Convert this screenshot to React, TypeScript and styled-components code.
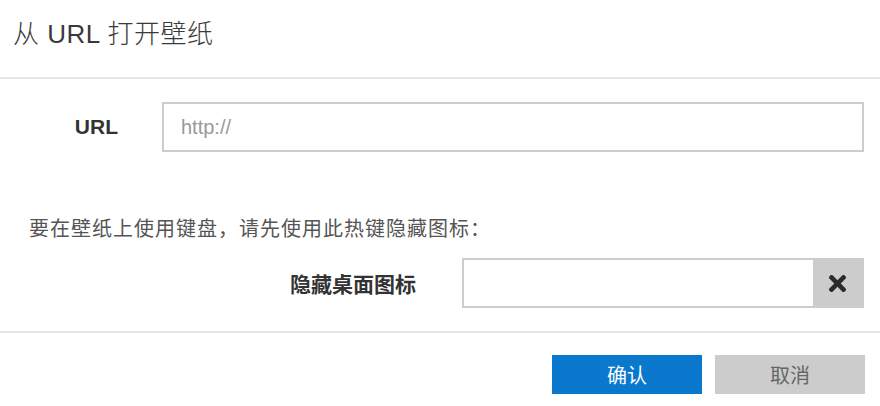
import styled, { createGlobalStyle } from "styled-components";
import { FaTimes } from "react-icons/fa";

const GlobalStyle = createGlobalStyle`
  body {
    margin: 0;
    background: #fff;
    font-family: "Liberation Sans", "Noto Sans CJK SC", sans-serif;
  }
`;

const Dialog = styled.div`
  width: 880px;
  height: 406px;
  display: flex;
  flex-direction: column;
  background: #fff;
  color: #333;
`;

const Header = styled.div`
  height: 79px;
  box-sizing: border-box;
  padding: 17px 13px 0;
  border-bottom: 2px solid #e6e6e6;
`;

const Title = styled.h1`
  margin: 0;
  font-size: 26px;
  font-weight: 300;
  line-height: 34px;
  letter-spacing: 0.5px;
  color: #3a3a3a;
`;

const Body = styled.div`
  display: flex;
  flex-direction: column;
  padding: 23px 16px 23px 0;
  border-bottom: 2px solid #e6e6e6;
`;

const FieldRow = styled.div<{ $labelWidth: number; $gap: number }>`
  display: flex;
  align-items: center;
  gap: ${(p) => p.$gap}px;

  & > label {
    width: ${(p) => p.$labelWidth}px;
  }
`;

const Label = styled.label`
  flex-shrink: 0;
  text-align: right;
  font-size: 21px;
  font-weight: 700;
  color: #333;
`;

const TextInput = styled.input`
  flex: 1;
  height: 50px;
  box-sizing: border-box;
  border: 2px solid #ccc;
  padding: 0 17px;
  font-family: inherit;
  font-size: 20px;
  color: #333;
  outline: none;

  &::placeholder {
    color: #999;
  }
`;

const Hint = styled.p`
  margin: 65px 0 17px 29px;
  font-size: 20px;
  line-height: 24px;
  letter-spacing: 1px;
  color: #555;
`;

const HotkeyBox = styled.div`
  flex: 1;
  height: 50px;
  box-sizing: border-box;
  display: flex;
  border: 2px solid #ccc;
`;

const HotkeyInput = styled.input`
  flex: 1;
  min-width: 0;
  border: none;
  outline: none;
  padding: 0 12px;
  font-family: inherit;
  font-size: 20px;
`;

const ClearButton = styled.button`
  width: 49px;
  border: none;
  padding: 0;
  background: #ccc;
  color: #2b2b2b;
  display: flex;
  align-items: center;
  justify-content: center;
  cursor: pointer;
`;

const Footer = styled.div`
  display: flex;
  justify-content: flex-end;
  gap: 13px;
  padding: 22px 15px 0;
`;

const Button = styled.button<{ $primary?: boolean }>`
  width: 150px;
  height: 39px;
  border: none;
  padding: 0;
  font-family: inherit;
  font-size: 20px;
  background: ${(p) => (p.$primary ? "#0a79cd" : "#cccccc")};
  color: ${(p) => (p.$primary ? "#fff" : "#666")};
  cursor: pointer;
`;

const App = () => {
  return (
    <Dialog>
      <GlobalStyle />
      <Header>
        <Title>从 URL 打开壁纸</Title>
      </Header>
      <Body>
        <FieldRow $labelWidth={118} $gap={44}>
          <Label>URL</Label>
          <TextInput placeholder="http://" />
        </FieldRow>
        <Hint>要在壁纸上使用键盘，请先使用此热键隐藏图标：</Hint>
        <FieldRow $labelWidth={416} $gap={46}>
          <Label>隐藏桌面图标</Label>
          <HotkeyBox>
            <HotkeyInput />
            <ClearButton>
              <FaTimes size={25} />
            </ClearButton>
          </HotkeyBox>
        </FieldRow>
      </Body>
      <Footer>
        <Button $primary>确认</Button>
        <Button>取消</Button>
      </Footer>
    </Dialog>
  );
};

export default App;
